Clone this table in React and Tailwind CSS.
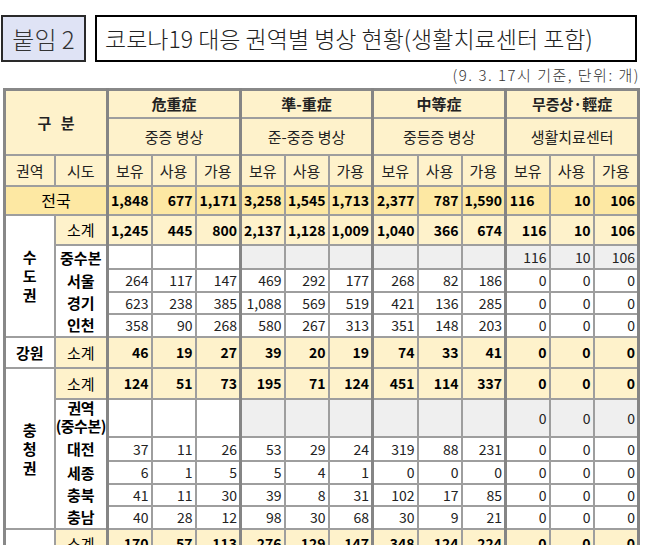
import React from "react";

const GROUP_R = "border-r-[3px] border-r-[#858585]";

function DataCells({ values, variant, grayFrom = 99 }) {
  return values.map((v, i) => {
    let bg = "bg-white";
    let weight = "font-normal text-[#222]";
    if (variant === "total") {
      bg = "bg-[#fde8a3]";
      weight = "font-bold text-black";
    } else if (variant === "sum") {
      bg = "bg-[#fef2cb]";
      weight = "font-bold text-black";
    } else if (i >= grayFrom) {
      bg = "bg-[#efefef]";
    }
    const grp = i % 3 === 2 ? GROUP_R : "";
    const extra = variant === "total" && i === 9 ? "pr-[14px]" : "pr-[2px]";
    return (
      <td
        key={i}
        className={`border-2 border-[#9e9e9e] ${grp} ${bg} ${weight} ${extra} text-right text-[14px] leading-none whitespace-nowrap`}
      >
        {v}
      </td>
    );
  });
}

const H = "border-2 border-[#9e9e9e] bg-[#fef2cb] text-center text-[14px] leading-none whitespace-nowrap";

function Vertical({ chars }) {
  return (
    <div className="flex flex-col items-center font-bold text-[15px] leading-[19px] text-black">
      {chars.map((c, i) => (
        <span key={i} className="block h-[19px]">
          {c}
        </span>
      ))}
    </div>
  );
}

export default function App() {
  const colCls = [
    "w-[50px]",
    "w-[53px]",
    "w-[44px]",
    "w-[44px]",
    "w-[45px]",
    "w-[44px]",
    "w-[44px]",
    "w-[44px]",
    "w-[45px]",
    "w-[44px]",
    "w-[44px]",
    "w-[44px]",
    "w-[44px]",
    "w-[45px]",
  ];
  const blank9 = ["", "", "", "", "", "", "", "", ""];
  const sub = "border-2 border-[#9e9e9e] bg-white text-center font-bold text-[15px] leading-none text-black whitespace-nowrap px-0";
  const sumLabel = "border-2 border-[#9e9e9e] bg-[#fef2cb] text-center text-[15px] leading-none text-black " + GROUP_R;

  return (
    <div className="w-[651px] h-[545px] overflow-hidden bg-white font-['Noto_Sans_CJK_KR','Noto_Sans',sans-serif] text-[#222]">
      <div className="pt-[15px] flex items-stretch">
        <div className="ml-[1px] w-[85px] h-[47px] border-2 border-[#2a2a2a] bg-[#dfe3f5] flex items-center justify-center text-[24px] font-light text-[#333]">
          붙임 2
        </div>
        <div className="ml-[9px] w-[542px] h-[47px] border-2 border-black bg-white flex items-center pl-[8px] text-[23px] font-light text-[#222] whitespace-nowrap">
          코로나19 대응 권역별 병상 현황(생활치료센터 포함)
        </div>
      </div>
      <div className="h-[26px] flex items-center justify-end pr-[11px] text-[15px] tracking-[1.5px] font-light text-[#333]">
        (9. 3. 17시 기준, 단위: 개)
      </div>
      <table className="ml-[3px] w-[634px] table-fixed border-collapse border-[3px] border-[#888]">
        <colgroup>
          {colCls.map((c, i) => (
            <col key={i} className={c} />
          ))}
        </colgroup>
        <thead>
          <tr className="h-[28px]">
            <td rowSpan={2} colSpan={2} className={`${H} ${GROUP_R} font-bold text-[15px] [word-spacing:6px]`}>
              구 분
            </td>
            <td colSpan={3} className={`${H} ${GROUP_R} font-bold text-[15px]`}>危重症</td>
            <td colSpan={3} className={`${H} ${GROUP_R} font-bold text-[15px]`}>準-重症</td>
            <td colSpan={3} className={`${H} ${GROUP_R} font-bold text-[15px]`}>中等症</td>
            <td colSpan={3} className={`${H} ${GROUP_R} font-bold text-[15px]`}>무증상·輕症</td>
          </tr>
          <tr className="h-[37px]">
            <td colSpan={3} className={`${H} ${GROUP_R} text-[15px]`}>중증 병상</td>
            <td colSpan={3} className={`${H} ${GROUP_R} text-[15px]`}>준-중증 병상</td>
            <td colSpan={3} className={`${H} ${GROUP_R} text-[15px]`}>중등증 병상</td>
            <td colSpan={3} className={`${H} ${GROUP_R} text-[15px]`}>생활치료센터</td>
          </tr>
          <tr className="h-[31px]">
            <td className={`${H} text-[15px]`}>권역</td>
            <td className={`${H} ${GROUP_R} text-[15px]`}>시도</td>
            {["보유", "사용", "가용", "보유", "사용", "가용", "보유", "사용", "가용", "보유", "사용", "가용"].map((t, i) => (
              <td key={i} className={`${H} text-[15px] ${i % 3 === 2 ? GROUP_R : ""}`}>
                {t}
              </td>
            ))}
          </tr>
        </thead>
        <tbody>
          <tr className="h-[29px]">
            <td colSpan={2} className={`border-2 border-[#9e9e9e] bg-[#fde8a3] text-center text-[16px] leading-none text-black ${GROUP_R}`}>
              전국
            </td>
            <DataCells variant="total" values={["1,848", "677", "1,171", "3,258", "1,545", "1,713", "2,377", "787", "1,590", "116", "10", "106"]} />
          </tr>

          {/* 수도권 */}
          <tr className="h-[30px]">
            <td rowSpan={5} className="border-2 border-[#9e9e9e] bg-white align-middle">
              <Vertical chars={["수", "도", "권"]} />
            </td>
            <td className={sumLabel}>소계</td>
            <DataCells variant="sum" values={["1,245", "445", "800", "2,137", "1,128", "1,009", "1,040", "366", "674", "116", "10", "106"]} />
          </tr>
          <tr className="h-[24px]">
            <td className={`${sub} text-[14px] border-b-0 ${GROUP_R}`}>중수본</td>
            <DataCells variant="gray" grayFrom={3} values={[...blank9, "116", "10", "106"]} />
          </tr>
          <tr className="h-[23px]">
            <td className={`${sub} border-y-0 ${GROUP_R}`}>서울</td>
            <DataCells variant="plain" values={["264", "117", "147", "469", "292", "177", "268", "82", "186", "0", "0", "0"]} />
          </tr>
          <tr className="h-[22px]">
            <td className={`${sub} border-y-0 ${GROUP_R}`}>경기</td>
            <DataCells variant="plain" values={["623", "238", "385", "1,088", "569", "519", "421", "136", "285", "0", "0", "0"]} />
          </tr>
          <tr className="h-[23px]">
            <td className={`${sub} border-t-0 ${GROUP_R}`}>인천</td>
            <DataCells variant="plain" values={["358", "90", "268", "580", "267", "313", "351", "148", "203", "0", "0", "0"]} />
          </tr>

          {/* 강원 */}
          <tr className="h-[31px]">
            <td className={sub}>강원</td>
            <td className={sumLabel}>소계</td>
            <DataCells variant="sum" values={["46", "19", "27", "39", "20", "19", "74", "33", "41", "0", "0", "0"]} />
          </tr>

          {/* 충청권 */}
          <tr className="h-[31px]">
            <td rowSpan={6} className="border-2 border-[#9e9e9e] bg-white align-middle">
              <Vertical chars={["충", "청", "권"]} />
            </td>
            <td className={sumLabel}>소계</td>
            <DataCells variant="sum" values={["124", "51", "73", "195", "71", "124", "451", "114", "337", "0", "0", "0"]} />
          </tr>
          <tr className="h-[38px]">
            <td className={`${sub} text-[13px] leading-[18px] tracking-[-0.5px] border-b-0 ${GROUP_R}`}>
              <div className="flex flex-col items-center">
                <span className="block h-[18px]">권역</span>
                <span className="block h-[18px]">(중수본)</span>
              </div>
            </td>
            <DataCells variant="gray" grayFrom={3} values={[...blank9, "0", "0", "0"]} />
          </tr>
          <tr className="h-[24px]">
            <td className={`${sub} border-y-0 ${GROUP_R}`}>대전</td>
            <DataCells variant="plain" values={["37", "11", "26", "53", "29", "24", "319", "88", "231", "0", "0", "0"]} />
          </tr>
          <tr className="h-[23px]">
            <td className={`${sub} border-y-0 ${GROUP_R}`}>세종</td>
            <DataCells variant="plain" values={["6", "1", "5", "5", "4", "1", "0", "0", "0", "0", "0", "0"]} />
          </tr>
          <tr className="h-[22px]">
            <td className={`${sub} border-y-0 ${GROUP_R}`}>충북</td>
            <DataCells variant="plain" values={["41", "11", "30", "39", "8", "31", "102", "17", "85", "0", "0", "0"]} />
          </tr>
          <tr className="h-[23px]">
            <td className={`${sub} border-t-0 ${GROUP_R}`}>충남</td>
            <DataCells variant="plain" values={["40", "28", "12", "98", "30", "68", "30", "9", "21", "0", "0", "0"]} />
          </tr>

          <tr className="h-[30px]">
            <td className="border-2 border-[#9e9e9e] bg-white"></td>
            <td className={sumLabel}>소계</td>
            <DataCells variant="sum" values={["170", "57", "113", "276", "129", "147", "348", "124", "224", "0", "0", "0"]} />
          </tr>
        </tbody>
      </table>
    </div>
  );
}
